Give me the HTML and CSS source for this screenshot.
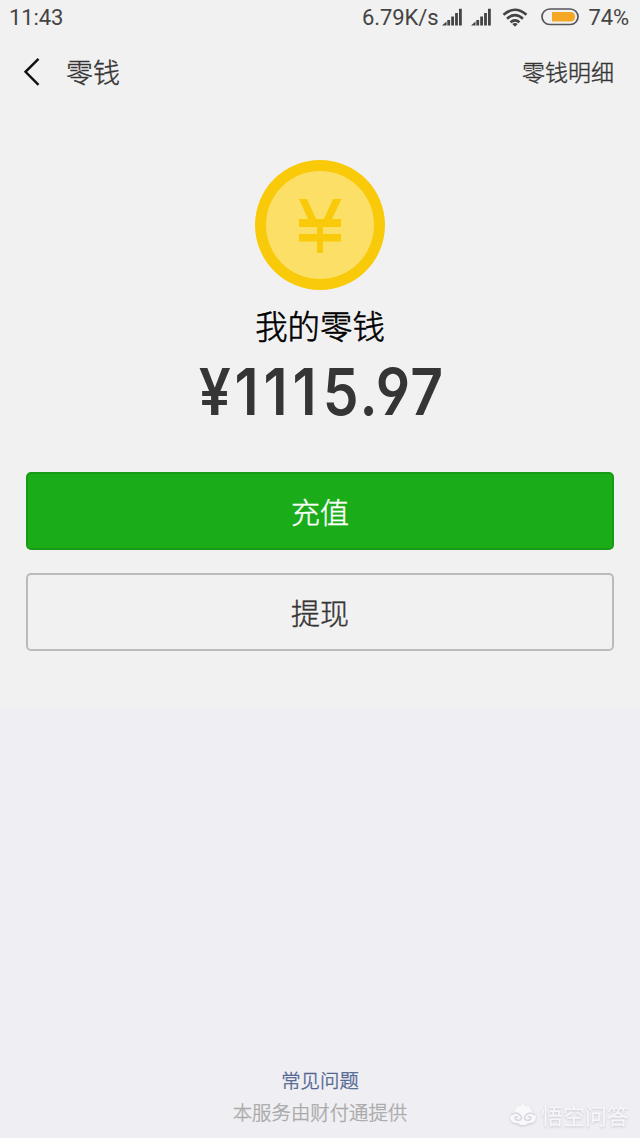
FILE: index.html
```html
<!DOCTYPE html>
<html lang="zh-CN">
<head>
<meta charset="utf-8">
<title>零钱</title>
<link rel="stylesheet" href="styles.css">
</head>
<body>
<div class="screen">
  <main class="panel">
    <div class="status">
      <span class="clock">11:43</span>
      <span class="speed">6.79K/s</span>
      <svg class="signal" width="20" height="18" viewBox="0 0 20 18"><path d="M0 17.500l4.500-4v4zM5.300 12h2.800v5.500H5.300zM9.200 8.500H12v9H9.200zM13.100 5h2.800v12.500h-2.800zM17 .8h2.800v16.700H17z"/></svg>
      <svg class="signal second" width="20" height="18" viewBox="0 0 20 18"><path d="M0 17.500l4.500-4v4zM5.300 12h2.800v5.500H5.300zM9.200 8.500H12v9H9.200zM13.100 5h2.800v12.500h-2.800zM17 .8h2.800v16.700H17z"/></svg>
      <svg class="wifi" width="26" height="19" viewBox="0 0 26 19"><path class="arc" d="M1.500 6.800Q13-3.300 24.500 6.800M5 10.700Q13 3.700 21 10.700M8.500 14.300Q13 10.300 17.500 14.300"/><path d="M10.300 16Q13 13.800 15.700 16L13 18.700z"/></svg>
      <svg class="battery" width="38" height="18" viewBox="0 0 38 18"><rect class="shell" x="1" y="1" width="36" height="15.500" rx="7.750"/><path class="charge" d="M11 4h18.500q4.500 0 4.500 4.750t-4.500 4.750H11z"/></svg>
      <span class="percent">74%</span>
    </div>
    <header class="bar">
      <svg class="back" width="18" height="30" viewBox="0 0 18 30"><path d="M15.500 1.800L2.500 14.800L15.500 27.800"/></svg>
      <h1 class="title">零钱</h1>
      <span class="detail">零钱明细</span>
    </header>
    <svg class="coin" width="130" height="130" viewBox="0 0 130 130">
      <circle class="rim" cx="65" cy="65" r="65"/>
      <circle class="face" cx="65" cy="65" r="54"/>
      <path class="rim" d="M44 39h8l9 20h8l9-20h8.500L77 59h9v8H68v7h18v7.500H68V93h-6V81.500H44V74h18v-7H44v-8h9z"/>
    </svg>
    <h2 class="label">我的零钱</h2>
    <svg class="amount" width="280" height="90" viewBox="180 345 280 90">
      <text transform="translate(190 414.500) scale(.89 1)" x="9.900 50 82.600 115.200 149.200 190.400 208.800 247.500">¥1115.97</text>
    </svg>
    <button class="btn primary">充值</button>
    <button class="btn plain">提现</button>
  </main>
  <footer class="footer">
    <a class="faq">常见问题</a>
    <p class="provider">本服务由财付通提供</p>
  </footer>
  <div class="mark">
    <svg width="28" height="24" viewBox="0 0 28 24"><path d="M5 10Q6 5 10 4q3 0 4-4q1 4 4 4q4 1 5 6q4 1 4 6q-1 5-6 5q-3 0-4 2h-6q-1-2-4-2q-5 0-6-5q0-5 4-6z"/><path class="eyes" d="M2 13q5-4 9 0q3 3 0 5q-4 1-5-2q1-2 3-1M26 13q-5-4-9 0q-3 3 0 5q4 1 5-2q-1-2-3-1"/></svg>
    <span>悟空问答</span>
  </div>
</div>
</body>
</html>
```
FILE: styles.css
```css
body { margin: 0; }
.screen {
  position: relative;
  width: 640px;
  height: 1138px;
  display: flex;
  flex-direction: column;
  justify-content: space-between;
  overflow: hidden;
  background: #efeef3;
  color: #353535;
  font-family: "Noto Sans CJK SC", sans-serif;
  font-weight: 300;
}
.panel {
  height: 708px;
  display: flex;
  flex-direction: column;
  align-items: center;
  background: #f1f1f1;
}
.status {
  box-sizing: border-box;
  width: 100%;
  height: 36px;
  padding: 0 10px 0 9px;
  display: flex;
  align-items: center;
  color: #444;
  fill: #444;
  font: 22px/36px Roboto, sans-serif;
  letter-spacing: -.1px;
}
.status svg { margin-top: -2px; }
.speed { margin-left: auto; }
.status .signal { margin-left: 4px; }
.status .second { margin-left: 9px; }
.wifi { margin-left: 11px; }
.arc { fill: none; stroke: #444; stroke-width: 2.6; }
.battery { margin: 0 9px 0 13px; }
.shell { fill: none; stroke: #55555c; stroke-width: 1.7; }
.charge { fill: #f5a623; }
.percent { margin-right: 1px; }
.bar {
  box-sizing: border-box;
  width: 100%;
  height: 72px;
  padding: 0 26px 0 23px;
  display: flex;
  align-items: center;
}
.title, .detail, .label, .btn, .faq, .provider { -webkit-text-stroke: .4px currentColor; }
.back { fill: none; stroke: #111; stroke-width: 2.4; }
.title { margin: 0 0 0 25px; font-size: 27px; line-height: 40px; font-weight: 300; }
.detail { margin: 0 0 2px auto; font-size: 23px; line-height: 36px; }
.coin { margin-top: 52px; }
.rim { fill: #f8ca09; }
.face { fill: #fbdf67; }
.label { margin: 11px 0 0; font-size: 32.400px; line-height: 48px; font-weight: 300; color: #000; -webkit-text-stroke-width: .6px; }
.amount {
  margin-top: -4px;
  font: 600 64px Inter, sans-serif;
  font-feature-settings: "cv04";
  fill: #353535;
}
.btn {
  box-sizing: border-box;
  width: 588px;
  height: 78px;
  padding: 0;
  border-radius: 5px;
  font: 300 29px/40px "Noto Sans CJK SC", sans-serif;
}
.primary { margin-top: 37px; border: 2px solid #179b16; background: #1aad19; color: #fff; }
.plain { margin-top: 23px; border: 2px solid #bbb; background: #f1f1f1; color: #353535; }
.footer {
  display: flex;
  flex-direction: column;
  align-items: center;
  padding-bottom: 10px;
  line-height: 32px;
}
.faq { font-size: 19.400px; color: #526691; }
.provider { margin: 0; font-size: 19.400px; color: #aaa; }
.mark {
  position: absolute;
  right: 11px;
  bottom: 8px;
  display: flex;
  align-items: center;
  gap: 4px;
  color: #f8f8fb;
  fill: #f8f8fb;
  font-size: 22px;
  font-weight: 400;
  line-height: 32px;
  filter: drop-shadow(0 1px 1px #c8c8ce);
}
.eyes { fill: none; stroke: #d7d7dd; stroke-width: 1.6; }
```
